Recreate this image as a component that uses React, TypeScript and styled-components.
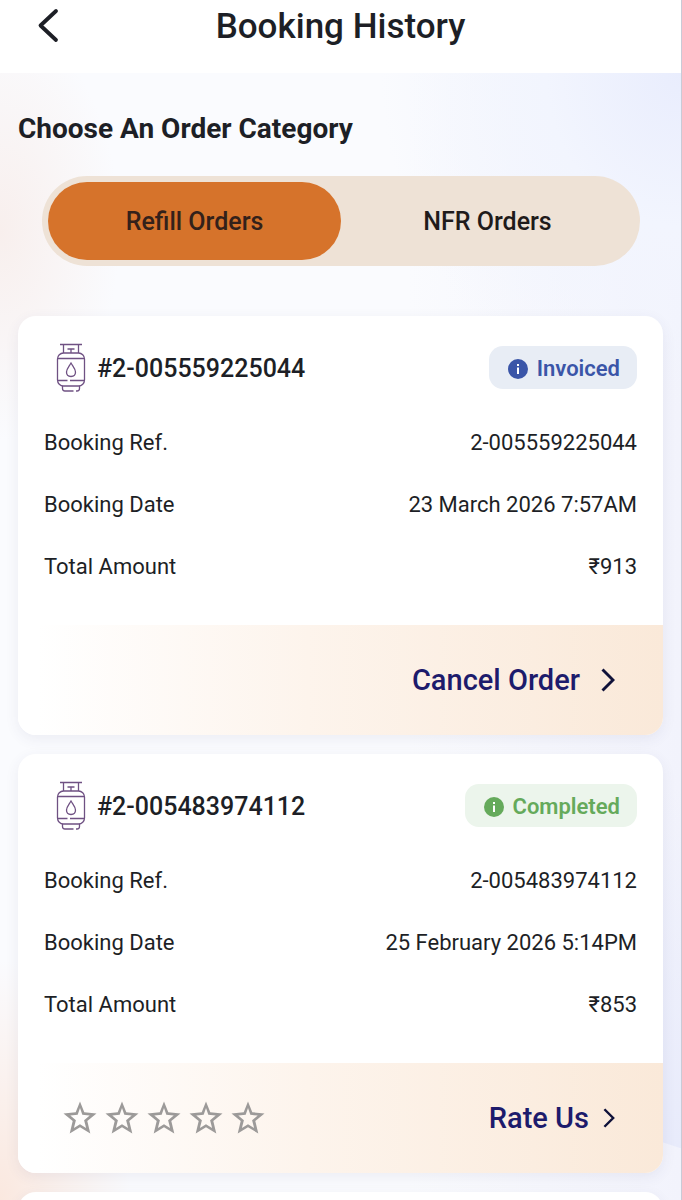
import React from "react";
import styled, { createGlobalStyle } from "styled-components";

const GlobalStyle = createGlobalStyle`
  *, *::before, *::after { box-sizing: border-box; }
  body {
    margin: 0;
    font-family: Roboto, "Noto Sans", sans-serif;
    color: #1d1f26;
    background: #ffffff;
  }
  h1, h2, h3, dl, dd { margin: 0; }
  button {
    font: inherit;
    color: inherit;
    border: 0;
    padding: 0;
    background: none;
    cursor: pointer;
  }
`;

const Page = styled.div`
  display: flex;
  flex-direction: column;
  height: 100vh;
  overflow: hidden;
  border-right: 1px solid #c9cad6;
`;

const Header = styled.header`
  display: grid;
  grid-template-columns: 40px 1fr 40px;
  align-items: center;
  flex: none;
  height: 73px;
  padding: 0 28px 22px;
`;

const BackButton = styled.button`
  display: flex;
  justify-content: center;
`;

const Title = styled.h1`
  font-size: 35px;
  line-height: 40px;
  font-weight: 500;
  text-align: center;
  padding-top: 2px;
`;

const Content = styled.main`
  flex: 1;
  min-height: 0;
  display: flex;
  flex-direction: column;
  padding: 39px 18px 0;
  background:
    linear-gradient(198deg, #e8ebfb00 0, #e8ebfb calc(100% - 7px), #e8ebfb00 calc(100% - 6px)) right bottom 52px / 22px 360px no-repeat,
    radial-gradient(ellipse 120px 210px at 0 14%, #f8efed 0%, #f8efed00 100%),
    radial-gradient(ellipse 130px 240px at 0 100%, #fae8df 0%, #fae8df00 100%),
    radial-gradient(ellipse 300px 340px at 100% 0, #e9edfd 0%, #f2f5fe 45%, #f9faff00 100%),
    linear-gradient(90deg, #fafbfe 60%, #f2f3fc 100%);
`;

const SectionTitle = styled.h2`
  font-size: 28px;
  line-height: 34px;
  font-weight: 700;
`;

const Tabs = styled.div`
  display: flex;
  flex: none;
  height: 90px;
  margin: 30px 23px 50px 24px;
  padding: 6px;
  border-radius: 45px;
  background: #eee2d6;
`;

const Tab = styled.button<{ $active?: boolean }>`
  flex: 1;
  padding-top: 1px;
  border-radius: 39px;
  font-size: 25px;
  line-height: 32px;
  font-weight: 500;
  color: ${(p) => (p.$active ? "#33211a" : "#1f1b1b")};
  background: ${(p) => (p.$active ? "#d6732b" : "transparent")};
`;

const CardList = styled.div`
  flex: 1;
  display: flex;
  flex-direction: column;
  gap: 19px;
`;

const Card = styled.article`
  flex: none;
  border-radius: 18px;
  background: #ffffff;
  box-shadow: 0 4px 14px rgba(60, 70, 110, 0.08);
  overflow: hidden;
`;

const NextCard = styled(Card)`
  min-height: 120px;
`;

const CardHeader = styled.div`
  display: flex;
  align-items: center;
  gap: 11px;
  height: 43px;
  margin: 30px 26px 23px 38px;
`;

const OrderId = styled.h3`
  flex: 1;
  padding-top: 2px;
  font-size: 25px;
  line-height: 32px;
  font-weight: 500;
`;

const Badge = styled.span<{ $color: string; $background: string }>`
  display: flex;
  align-items: center;
  gap: 9px;
  height: 43px;
  padding: 2px 17px 0 19px;
  border-radius: 14px;
  font-size: 22px;
  line-height: 28px;
  font-weight: 600;
  color: ${(p) => p.$color};
  background: ${(p) => p.$background};
`;

const Details = styled.dl`
  padding: 0 26px 27px;
`;

const DetailRow = styled.div`
  display: flex;
  align-items: center;
  justify-content: space-between;
  height: 62px;
  font-size: 22px;
  line-height: 28px;
`;

const CardFooter = styled.div`
  display: flex;
  align-items: center;
  height: 110px;
  padding: 0 48px 0 45px;
  background: linear-gradient(90deg, #ffffff 3%, #fdf4ec 45%, #fae9d9 100%);
`;

const Stars = styled.div`
  display: flex;
  gap: 8px;
`;

const StarButton = styled.button`
  display: flex;
  color: #9c9a99;
`;

const Action = styled.button<{ $gap: number }>`
  display: flex;
  align-items: center;
  gap: ${(p) => p.$gap}px;
  margin-left: auto;
  font-size: 29px;
  line-height: 36px;
  font-weight: 500;
  color: #1d1b6c;
`;

const BackIcon = () => (
  <svg width="24" height="36" viewBox="0 0 24 36" fill="none" aria-hidden="true">
    <path d="M20 3L4.500 17.500L20 32" stroke="#1d1f26" strokeWidth="3.800" strokeLinecap="round" strokeLinejoin="round" />
  </svg>
);

const ChevronIcon = ({ width, height }: { width: number; height: number }) => (
  <svg width={width} height={height} viewBox="0 0 14 24" fill="none" aria-hidden="true">
    <path d="M1.500 1.500L12 12L1.500 22.500" stroke="#10123a" strokeWidth="2.900" />
  </svg>
);

const InfoIcon = () => (
  <svg width="20" height="20" viewBox="0 0 20 20" aria-hidden="true">
    <circle cx="10" cy="10" r="10" fill="currentColor" />
    <path d="M9 5h2v2h-2zM9 8.500h2v6.500h-2z" fill="#ffffff" />
  </svg>
);

const StarIcon = () => (
  <svg width="34" height="34" viewBox="0 0 34 34" fill="currentColor" fillRule="evenodd" aria-hidden="true">
    <path d="M17 0.500L21.300 11.200L33.500 12.500L24.300 20L27.300 32.500L17 26.300L6.700 32.500L9.700 20L0.500 12.500L12.700 11.200ZM17 7L14.700 13.700L7.300 14.600L12.900 19.200L10.900 27L17 23.200L23.100 27L21.100 19.200L26.700 14.600L19.300 13.700Z" />
  </svg>
);

const CylinderIcon = () => (
  <svg width="30" height="50" viewBox="0 0 30 50" fill="none" stroke="#6f5183" strokeWidth="1.300" aria-hidden="true">
    <path d="M4 1.500H26M7.500 1.500V10M22.500 1.500V10M11.500 6H18.500M15 6V10" />
    <rect x="1.500" y="10" width="27" height="33" rx="6" />
    <path d="M1.500 15.500H28.500M1.500 37.500H11.500M14 37.500H28.500" />
    <path d="M15 20C17 23.500 19.500 26 19.500 29C19.500 32 17.500 33.500 15 33.500C12.500 33.500 10.500 32 10.500 29C10.500 26 13 23.500 15 20Z" />
    <path d="M6.500 43V45.500Q6.500 48 9 48H17.500M20 48H21Q23.500 48 23.500 45.500V43" />
  </svg>
);

type Order = {
  reference: string;
  date: string;
  amount: string;
  status: "Invoiced" | "Completed";
};

const orders: Order[] = [
  { reference: "2-005559225044", date: "23 March 2026 7:57AM", amount: "₹913", status: "Invoiced" },
  { reference: "2-005483974112", date: "25 February 2026 5:14PM", amount: "₹853", status: "Completed" },
];

const badgeColors = {
  Invoiced: { color: "#3a55a8", background: "#e8edf5" },
  Completed: { color: "#65aa5b", background: "#ecf5ec" },
};

const OrderCard = ({ order }: { order: Order }) => {
  const completed = order.status === "Completed";
  const colors = badgeColors[order.status];
  return (
    <Card>
      <CardHeader>
        <CylinderIcon />
        <OrderId>#{order.reference}</OrderId>
        <Badge $color={colors.color} $background={colors.background}>
          <InfoIcon />
          {order.status}
        </Badge>
      </CardHeader>
      <Details>
        <DetailRow>
          <dt>Booking Ref.</dt>
          <dd>{order.reference}</dd>
        </DetailRow>
        <DetailRow>
          <dt>Booking Date</dt>
          <dd>{order.date}</dd>
        </DetailRow>
        <DetailRow>
          <dt>Total Amount</dt>
          <dd>{order.amount}</dd>
        </DetailRow>
      </Details>
      <CardFooter>
        {completed && (
          <Stars>
            {[1, 2, 3, 4, 5].map((n) => (
              <StarButton key={n} type="button" aria-label={`Rate ${n}`}>
                <StarIcon />
              </StarButton>
            ))}
          </Stars>
        )}
        <Action type="button" $gap={completed ? 14 : 21}>
          {completed ? "Rate Us" : "Cancel Order"}
          {completed ? <ChevronIcon width={12} height={20} /> : <ChevronIcon width={14} height={24} />}
        </Action>
      </CardFooter>
    </Card>
  );
};

export default function App() {
  return (
    <>
      <GlobalStyle />
      <Page>
        <Header>
          <BackButton type="button" aria-label="Back">
            <BackIcon />
          </BackButton>
          <Title>Booking History</Title>
        </Header>
        <Content>
          <SectionTitle>Choose An Order Category</SectionTitle>
          <Tabs role="tablist">
            <Tab type="button" role="tab" aria-selected={true} $active>
              Refill Orders
            </Tab>
            <Tab type="button" role="tab" aria-selected={false}>
              NFR Orders
            </Tab>
          </Tabs>
          <CardList>
            {orders.map((order) => (
              <OrderCard key={order.reference} order={order} />
            ))}
            <NextCard />
          </CardList>
        </Content>
      </Page>
    </>
  );
}
